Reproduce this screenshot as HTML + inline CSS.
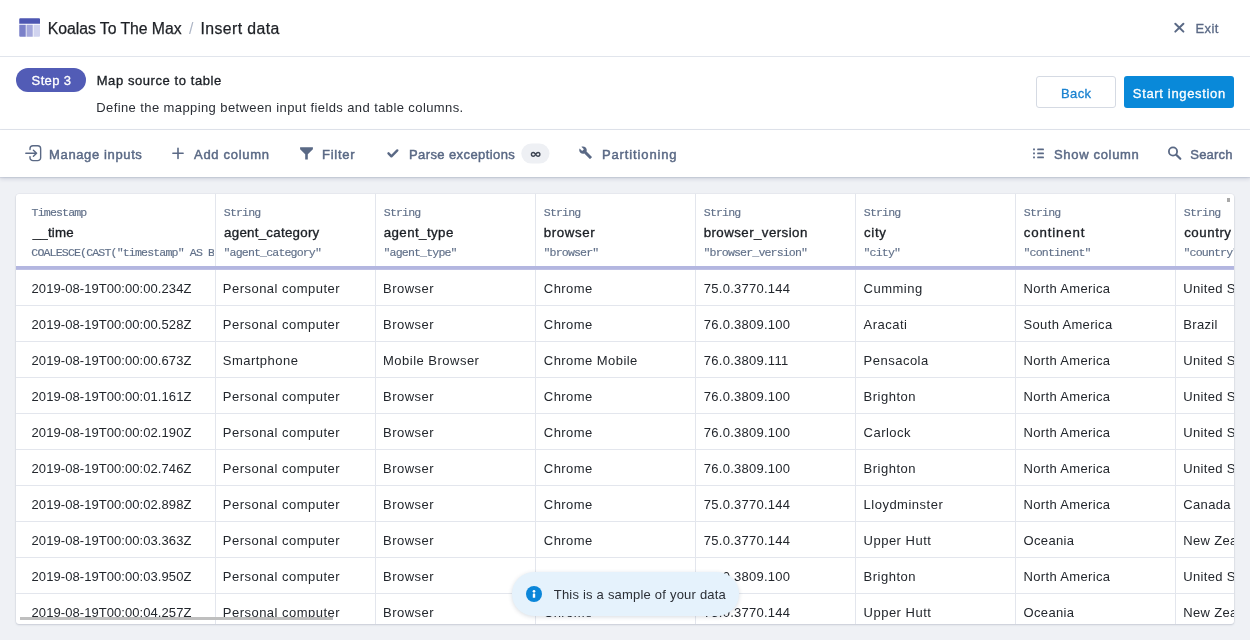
<!DOCTYPE html>
<html><head><meta charset="utf-8">
<style>
*{box-sizing:border-box;margin:0;padding:0}
html,body{width:1250px;height:640px;overflow:hidden;background:#eff1f5;font-family:"Liberation Sans",sans-serif;color:#1d2127}
#root{position:absolute;left:0;top:0;width:1250px;height:640px;will-change:transform}
.a{position:absolute;white-space:nowrap}
.t{position:absolute;white-space:nowrap;line-height:16px}
#hdr{position:absolute;left:0;top:0;width:1250px;height:57px;background:#fff;border-bottom:1px solid #e1e5ec}
#step{position:absolute;left:0;top:57px;width:1250px;height:73px;background:#fff;border-bottom:1px solid #e1e5ec}
#tb{position:absolute;left:0;top:130px;width:1250px;height:47px;background:#fff;box-shadow:0 2px 4px rgba(40,55,100,.15),0 1px 1px rgba(40,55,100,.1)}
.pill{position:absolute;left:16px;top:68px;width:70px;height:24px;border-radius:12px;background:#525cb6}
.btn{position:absolute;top:76.4px;height:32px;border-radius:3px}
#card{position:absolute;left:16px;top:194px;width:1218px;height:430px;background:#fff;border-radius:3px;box-shadow:0 0 0 0.5px rgba(60,70,100,.08),0 1px 2px rgba(60,70,100,.18);overflow:hidden}
.vd{position:absolute;top:0;width:1px;height:430px;background:#e3e6ed}
.hc{position:absolute;top:0;height:72px;overflow:hidden}
.ty,.ex{position:absolute;font-family:"Liberation Mono",monospace;font-size:11.6px;line-height:12px;letter-spacing:-0.86px;color:#617089;-webkit-text-stroke:0.15px #617089;white-space:nowrap}
.fn{position:absolute;font-size:13.3px;line-height:16px;letter-spacing:0.2px;-webkit-text-stroke:0.35px #1c2026;color:#1c2026;white-space:nowrap}
.bl{position:absolute;left:0;top:72px;width:1218px;height:4px;background:#b3b6e0;border-bottom:1px solid #bdbfe4}
.rd{position:absolute;left:0;width:1218px;height:1px;background:#e3e6ed}
.dc{position:absolute;height:16px;overflow:hidden;font-size:13px;line-height:16px;color:#23272d;white-space:nowrap}
#toast{position:absolute;left:511.5px;top:572px;width:227px;height:44px;border-radius:22px;background:#e5f2fc;box-shadow:0 1px 4px rgba(40,60,90,.18)}

</style></head><body>
<div id="root">
<div id="hdr">
  <svg class="a" style="left:19px;top:18px" width="22" height="20" viewBox="0 0 22 20">
    <path d="M1.25 0.25h18.75a1 1 0 0 1 1 1v4.5h-20.75v-4.5a1 1 0 0 1 1-1z" fill="#4e57b2"/>
    <path d="M0.25 6.75h6.5v12h-5.5a1 1 0 0 1-1-1z" fill="#7a80c9"/>
    <rect x="7.5" y="6.75" width="6.25" height="12" fill="#a4a8dc"/>
    <path d="M14.5 6.75h6.5v11a1 1 0 0 1-1 1h-5.5z" fill="#d0d3ef"/>
  </svg>
  <svg class="a" style="left:1172px;top:20px" width="14" height="14" viewBox="0 0 14 14"><path d="M3.3 3.7L11.4 11.6M11.4 3.7L3.3 11.6" stroke="#5a6985" stroke-width="2" stroke-linecap="round"/></svg>
</div>
<div id="step">
</div>
<div class="pill"></div>
<div class="btn" style="left:1036.4px;width:80px;border:1px solid #d5dae3;background:#fff"></div>
<div class="btn" style="left:1124.4px;width:110px;background:#0989d9"></div>
<div id="tb">
  <svg class="a" style="left:0;top:0" width="1250" height="47" viewBox="0 0 1250 47">
    <g fill="none" stroke="#5a6985" stroke-width="1.4" stroke-linecap="round" stroke-linejoin="round">
      <path d="M30 19.5V18.75A3 3 0 0 1 33 15.75H37.65A3 3 0 0 1 40.65 18.75V27.65A3 3 0 0 1 37.65 30.65H33A3 3 0 0 1 30 27.65V26.6"/>
      <path d="M25.8 23.2H36.6M33.4 20.2L36.6 23.2L33.4 26.2"/>
    </g>
    <path d="M172.9 23.3H183.1M178 18.3V28.5" stroke="#5a6985" stroke-width="1.6" stroke-linecap="round"/>
    <path d="M300.1 17.3H312.9V19.3L307.8 24.2V29.5H305.2V24.2L300.1 19.3Z" fill="#5a6985"/>
    <path d="M388.5 23.3L391.4 26.3L397.3 20.4" fill="none" stroke="#5a6985" stroke-width="2.4" stroke-linecap="round" stroke-linejoin="round"/>
    <rect x="521.3" y="13.5" width="28.2" height="20.1" rx="10" fill="#eef0f4"/>
    <path d="M535.65 24.35C534.8 23 534.1 22.45 533.3 22.45A1.9 1.9 0 0 0 533.3 26.25C534.1 26.25 534.8 25.7 535.65 24.35C536.5 23 537.2 22.45 538 22.45A1.9 1.9 0 0 1 538 26.25C537.2 26.25 536.5 25.7 535.65 24.35Z" fill="none" stroke="#3d4452" stroke-width="1.35"/>
    <g transform="translate(578.7 15.8) scale(0.575)"><path d="M22.7 19l-9.1-9.1c.9-2.3.4-5-1.5-6.9-2-2-5-2.4-7.4-1.3L9 6 6 9 1.6 4.7C.4 7.1.9 10.1 2.9 12.1c1.9 1.9 4.6 2.4 6.9 1.5l9.1 9.1c.4.4 1 .4 1.4 0l2.3-2.3c.5-.4.5-1.1.1-1.4z" fill="#5a6985"/></g>
    <g fill="#5a6985">
      <rect x="1033.1" y="18.5" width="1.8" height="1.8"/><rect x="1037.2" y="18.5" width="6.7" height="1.8" rx=".4"/>
      <rect x="1033.1" y="22.5" width="1.8" height="1.8"/><rect x="1037.2" y="22.5" width="6.7" height="1.8" rx=".4"/>
      <rect x="1033.1" y="26.5" width="1.8" height="1.8"/><rect x="1037.2" y="26.5" width="6.7" height="1.8" rx=".4"/>
    </g>
    <circle cx="1173" cy="21.5" r="4.1" fill="none" stroke="#5a6985" stroke-width="1.8"/>
    <path d="M1176.2 24.7L1180.3 28.8" stroke="#5a6985" stroke-width="2.2" stroke-linecap="round"/>
  </svg>
</div>
<div id="crumb1" class="t" style="left:47.85px;top:21.30px;font-size:15.8px;letter-spacing:-0.055px;-webkit-text-stroke:0.25px #1e2126;color:#1e2126">Koalas To The Max</div>
<div id="crumb2" class="t" style="left:189.01px;top:21.30px;font-size:15.8px;letter-spacing:0.000px;color:#aeb6c6">/</div>
<div id="crumb3" class="t" style="left:200.51px;top:21.30px;font-size:15.8px;letter-spacing:0.416px;-webkit-text-stroke:0.25px #1e2126;color:#1e2126">Insert data</div>
<div id="exit" class="t" style="left:1195.39px;top:21.30px;font-size:13px;letter-spacing:0.416px;-webkit-text-stroke:0.3px #5a6985;color:#5a6985">Exit</div>
<div id="steptxt" class="t" style="left:31.62px;top:73.30px;font-size:13px;letter-spacing:0.365px;-webkit-text-stroke:0.3px #ffffff;color:#ffffff">Step 3</div>
<div id="title" class="t" style="left:96.72px;top:73.30px;font-size:13px;letter-spacing:0.573px;-webkit-text-stroke:0.35px #1c2026;color:#1c2026">Map source to table</div>
<div id="desc" class="t" style="left:96.27px;top:100.30px;font-size:13px;letter-spacing:0.402px;color:#2a2e35">Define the mapping between input fields and table columns.</div>
<div id="back" class="t" style="left:1061.07px;top:86.30px;font-size:13px;letter-spacing:0.357px;-webkit-text-stroke:0.3px #1a82d0;color:#1a82d0">Back</div>
<div id="start" class="t" style="left:1132.83px;top:86.30px;font-size:13px;letter-spacing:0.661px;-webkit-text-stroke:0.3px #ffffff;color:#ffffff">Start ingestion</div>
<div id="tb1" class="t" style="left:49.09px;top:147.30px;font-size:13px;letter-spacing:0.626px;-webkit-text-stroke:0.45px #5a6985;color:#5a6985">Manage inputs</div>
<div id="tb2" class="t" style="left:194.09px;top:147.30px;font-size:13px;letter-spacing:0.691px;-webkit-text-stroke:0.45px #5a6985;color:#5a6985">Add column</div>
<div id="tb3" class="t" style="left:322.07px;top:147.30px;font-size:13px;letter-spacing:0.740px;-webkit-text-stroke:0.45px #5a6985;color:#5a6985">Filter</div>
<div id="tb4" class="t" style="left:408.98px;top:147.30px;font-size:13px;letter-spacing:0.406px;-webkit-text-stroke:0.45px #5a6985;color:#5a6985">Parse exceptions</div>
<div id="tb5" class="t" style="left:601.98px;top:147.30px;font-size:13px;letter-spacing:0.870px;-webkit-text-stroke:0.45px #5a6985;color:#5a6985">Partitioning</div>
<div id="tb6" class="t" style="left:1053.98px;top:147.30px;font-size:13px;letter-spacing:0.684px;-webkit-text-stroke:0.45px #5a6985;color:#5a6985">Show column</div>
<div id="tb7" class="t" style="left:1190.32px;top:147.30px;font-size:13px;letter-spacing:0.205px;-webkit-text-stroke:0.45px #5a6985;color:#5a6985">Search</div>
<div id="card">
<div class="vd" style="left:199px"></div>
<div class="vd" style="left:359px"></div>
<div class="vd" style="left:519px"></div>
<div class="vd" style="left:679px"></div>
<div class="vd" style="left:839px"></div>
<div class="vd" style="left:999px"></div>
<div class="vd" style="left:1159px"></div>
<div class="hc" style="left:0px;width:198px"><div class="ty" style="left:15.60px;top:13.30px">Timestamp</div><div class="fn" style="left:16.74px;top:31.30px;letter-spacing:0.200px">__time</div><div class="ex" style="left:15.30px;top:53.30px">COALESCE(CAST("timestamp" AS BIGINT),0)</div></div>
<div class="hc" style="left:199px;width:159px"><div class="ty" style="left:8.80px;top:13.30px">String</div><div class="fn" style="left:9.09px;top:31.30px;letter-spacing:0.270px">agent_category</div><div class="ex" style="left:8.50px;top:53.30px">"agent_category"</div></div>
<div class="hc" style="left:359px;width:159px"><div class="ty" style="left:8.80px;top:13.30px">String</div><div class="fn" style="left:8.68px;top:31.30px;letter-spacing:0.423px">agent_type</div><div class="ex" style="left:8.50px;top:53.30px">"agent_type"</div></div>
<div class="hc" style="left:519px;width:159px"><div class="ty" style="left:8.80px;top:13.30px">String</div><div class="fn" style="left:8.81px;top:31.30px;letter-spacing:0.595px">browser</div><div class="ex" style="left:8.50px;top:53.30px">"browser"</div></div>
<div class="hc" style="left:679px;width:159px"><div class="ty" style="left:8.80px;top:13.30px">String</div><div class="fn" style="left:8.67px;top:31.30px;letter-spacing:0.435px">browser_version</div><div class="ex" style="left:8.50px;top:53.30px">"browser_version"</div></div>
<div class="hc" style="left:839px;width:159px"><div class="ty" style="left:8.80px;top:13.30px">String</div><div class="fn" style="left:9.03px;top:31.30px;letter-spacing:0.656px">city</div><div class="ex" style="left:8.50px;top:53.30px">"city"</div></div>
<div class="hc" style="left:999px;width:159px"><div class="ty" style="left:8.80px;top:13.30px">String</div><div class="fn" style="left:8.75px;top:31.30px;letter-spacing:0.835px">continent</div><div class="ex" style="left:8.50px;top:53.30px">"continent"</div></div>
<div class="hc" style="left:1159px;width:159px"><div class="ty" style="left:8.80px;top:13.30px">String</div><div class="fn" style="left:9.20px;top:31.30px;letter-spacing:0.536px">country</div><div class="ex" style="left:8.50px;top:53.30px">"country"</div></div>
<div class="bl"></div>
<div class="rd" style="top:111px"></div>
<div class="dc" style="left:0px;width:198px;top:87.30px;padding-left:15.57px;letter-spacing:0.066px">2019-08-19T00:00:00.234Z</div>
<div class="dc" style="left:199px;width:159px;top:87.30px;padding-left:7.84px;letter-spacing:0.473px">Personal computer</div>
<div class="dc" style="left:359px;width:159px;top:87.30px;padding-left:8.01px;letter-spacing:0.488px">Browser</div>
<div class="dc" style="left:519px;width:159px;top:87.30px;padding-left:8.83px;letter-spacing:0.448px">Chrome</div>
<div class="dc" style="left:679px;width:159px;top:87.30px;padding-left:8.87px;letter-spacing:0.256px">75.0.3770.144</div>
<div class="dc" style="left:839px;width:159px;top:87.30px;padding-left:8.56px;letter-spacing:0.498px">Cumming</div>
<div class="dc" style="left:999px;width:159px;top:87.30px;padding-left:8.56px;letter-spacing:0.337px">North America</div>
<div class="dc" style="left:1159px;width:159px;top:87.30px;padding-left:8.24px;letter-spacing:0.349px">United States</div>
<div class="rd" style="top:147px"></div>
<div class="dc" style="left:0px;width:198px;top:123.30px;padding-left:15.57px;letter-spacing:0.066px">2019-08-19T00:00:00.528Z</div>
<div class="dc" style="left:199px;width:159px;top:123.30px;padding-left:7.84px;letter-spacing:0.473px">Personal computer</div>
<div class="dc" style="left:359px;width:159px;top:123.30px;padding-left:8.01px;letter-spacing:0.488px">Browser</div>
<div class="dc" style="left:519px;width:159px;top:123.30px;padding-left:8.83px;letter-spacing:0.448px">Chrome</div>
<div class="dc" style="left:679px;width:159px;top:123.30px;padding-left:8.87px;letter-spacing:0.256px">76.0.3809.100</div>
<div class="dc" style="left:839px;width:159px;top:123.30px;padding-left:8.56px;letter-spacing:0.498px">Aracati</div>
<div class="dc" style="left:999px;width:159px;top:123.30px;padding-left:8.56px;letter-spacing:0.337px">South America</div>
<div class="dc" style="left:1159px;width:159px;top:123.30px;padding-left:8.24px;letter-spacing:0.349px">Brazil</div>
<div class="rd" style="top:183px"></div>
<div class="dc" style="left:0px;width:198px;top:159.30px;padding-left:15.57px;letter-spacing:0.066px">2019-08-19T00:00:00.673Z</div>
<div class="dc" style="left:199px;width:159px;top:159.30px;padding-left:7.84px;letter-spacing:0.473px">Smartphone</div>
<div class="dc" style="left:359px;width:159px;top:159.30px;padding-left:8.01px;letter-spacing:0.488px">Mobile Browser</div>
<div class="dc" style="left:519px;width:159px;top:159.30px;padding-left:8.83px;letter-spacing:0.448px">Chrome Mobile</div>
<div class="dc" style="left:679px;width:159px;top:159.30px;padding-left:8.87px;letter-spacing:0.256px">76.0.3809.111</div>
<div class="dc" style="left:839px;width:159px;top:159.30px;padding-left:8.56px;letter-spacing:0.498px">Pensacola</div>
<div class="dc" style="left:999px;width:159px;top:159.30px;padding-left:8.56px;letter-spacing:0.337px">North America</div>
<div class="dc" style="left:1159px;width:159px;top:159.30px;padding-left:8.24px;letter-spacing:0.349px">United States</div>
<div class="rd" style="top:219px"></div>
<div class="dc" style="left:0px;width:198px;top:195.30px;padding-left:15.57px;letter-spacing:0.066px">2019-08-19T00:00:01.161Z</div>
<div class="dc" style="left:199px;width:159px;top:195.30px;padding-left:7.84px;letter-spacing:0.473px">Personal computer</div>
<div class="dc" style="left:359px;width:159px;top:195.30px;padding-left:8.01px;letter-spacing:0.488px">Browser</div>
<div class="dc" style="left:519px;width:159px;top:195.30px;padding-left:8.83px;letter-spacing:0.448px">Chrome</div>
<div class="dc" style="left:679px;width:159px;top:195.30px;padding-left:8.87px;letter-spacing:0.256px">76.0.3809.100</div>
<div class="dc" style="left:839px;width:159px;top:195.30px;padding-left:8.56px;letter-spacing:0.498px">Brighton</div>
<div class="dc" style="left:999px;width:159px;top:195.30px;padding-left:8.56px;letter-spacing:0.337px">North America</div>
<div class="dc" style="left:1159px;width:159px;top:195.30px;padding-left:8.24px;letter-spacing:0.349px">United States</div>
<div class="rd" style="top:255px"></div>
<div class="dc" style="left:0px;width:198px;top:231.30px;padding-left:15.57px;letter-spacing:0.066px">2019-08-19T00:00:02.190Z</div>
<div class="dc" style="left:199px;width:159px;top:231.30px;padding-left:7.84px;letter-spacing:0.473px">Personal computer</div>
<div class="dc" style="left:359px;width:159px;top:231.30px;padding-left:8.01px;letter-spacing:0.488px">Browser</div>
<div class="dc" style="left:519px;width:159px;top:231.30px;padding-left:8.83px;letter-spacing:0.448px">Chrome</div>
<div class="dc" style="left:679px;width:159px;top:231.30px;padding-left:8.87px;letter-spacing:0.256px">76.0.3809.100</div>
<div class="dc" style="left:839px;width:159px;top:231.30px;padding-left:8.56px;letter-spacing:0.498px">Carlock</div>
<div class="dc" style="left:999px;width:159px;top:231.30px;padding-left:8.56px;letter-spacing:0.337px">North America</div>
<div class="dc" style="left:1159px;width:159px;top:231.30px;padding-left:8.24px;letter-spacing:0.349px">United States</div>
<div class="rd" style="top:291px"></div>
<div class="dc" style="left:0px;width:198px;top:267.30px;padding-left:15.57px;letter-spacing:0.066px">2019-08-19T00:00:02.746Z</div>
<div class="dc" style="left:199px;width:159px;top:267.30px;padding-left:7.84px;letter-spacing:0.473px">Personal computer</div>
<div class="dc" style="left:359px;width:159px;top:267.30px;padding-left:8.01px;letter-spacing:0.488px">Browser</div>
<div class="dc" style="left:519px;width:159px;top:267.30px;padding-left:8.83px;letter-spacing:0.448px">Chrome</div>
<div class="dc" style="left:679px;width:159px;top:267.30px;padding-left:8.87px;letter-spacing:0.256px">76.0.3809.100</div>
<div class="dc" style="left:839px;width:159px;top:267.30px;padding-left:8.56px;letter-spacing:0.498px">Brighton</div>
<div class="dc" style="left:999px;width:159px;top:267.30px;padding-left:8.56px;letter-spacing:0.337px">North America</div>
<div class="dc" style="left:1159px;width:159px;top:267.30px;padding-left:8.24px;letter-spacing:0.349px">United States</div>
<div class="rd" style="top:327px"></div>
<div class="dc" style="left:0px;width:198px;top:303.30px;padding-left:15.57px;letter-spacing:0.066px">2019-08-19T00:00:02.898Z</div>
<div class="dc" style="left:199px;width:159px;top:303.30px;padding-left:7.84px;letter-spacing:0.473px">Personal computer</div>
<div class="dc" style="left:359px;width:159px;top:303.30px;padding-left:8.01px;letter-spacing:0.488px">Browser</div>
<div class="dc" style="left:519px;width:159px;top:303.30px;padding-left:8.83px;letter-spacing:0.448px">Chrome</div>
<div class="dc" style="left:679px;width:159px;top:303.30px;padding-left:8.87px;letter-spacing:0.256px">75.0.3770.144</div>
<div class="dc" style="left:839px;width:159px;top:303.30px;padding-left:8.56px;letter-spacing:0.498px">Lloydminster</div>
<div class="dc" style="left:999px;width:159px;top:303.30px;padding-left:8.56px;letter-spacing:0.337px">North America</div>
<div class="dc" style="left:1159px;width:159px;top:303.30px;padding-left:8.24px;letter-spacing:0.349px">Canada</div>
<div class="rd" style="top:363px"></div>
<div class="dc" style="left:0px;width:198px;top:339.30px;padding-left:15.57px;letter-spacing:0.066px">2019-08-19T00:00:03.363Z</div>
<div class="dc" style="left:199px;width:159px;top:339.30px;padding-left:7.84px;letter-spacing:0.473px">Personal computer</div>
<div class="dc" style="left:359px;width:159px;top:339.30px;padding-left:8.01px;letter-spacing:0.488px">Browser</div>
<div class="dc" style="left:519px;width:159px;top:339.30px;padding-left:8.83px;letter-spacing:0.448px">Chrome</div>
<div class="dc" style="left:679px;width:159px;top:339.30px;padding-left:8.87px;letter-spacing:0.256px">75.0.3770.144</div>
<div class="dc" style="left:839px;width:159px;top:339.30px;padding-left:8.56px;letter-spacing:0.498px">Upper Hutt</div>
<div class="dc" style="left:999px;width:159px;top:339.30px;padding-left:8.56px;letter-spacing:0.337px">Oceania</div>
<div class="dc" style="left:1159px;width:159px;top:339.30px;padding-left:8.24px;letter-spacing:0.349px">New Zealand</div>
<div class="rd" style="top:399px"></div>
<div class="dc" style="left:0px;width:198px;top:375.30px;padding-left:15.57px;letter-spacing:0.066px">2019-08-19T00:00:03.950Z</div>
<div class="dc" style="left:199px;width:159px;top:375.30px;padding-left:7.84px;letter-spacing:0.473px">Personal computer</div>
<div class="dc" style="left:359px;width:159px;top:375.30px;padding-left:8.01px;letter-spacing:0.488px">Browser</div>
<div class="dc" style="left:519px;width:159px;top:375.30px;padding-left:8.83px;letter-spacing:0.448px">Chrome</div>
<div class="dc" style="left:679px;width:159px;top:375.30px;padding-left:8.87px;letter-spacing:0.256px">76.0.3809.100</div>
<div class="dc" style="left:839px;width:159px;top:375.30px;padding-left:8.56px;letter-spacing:0.498px">Brighton</div>
<div class="dc" style="left:999px;width:159px;top:375.30px;padding-left:8.56px;letter-spacing:0.337px">North America</div>
<div class="dc" style="left:1159px;width:159px;top:375.30px;padding-left:8.24px;letter-spacing:0.349px">United States</div>
<div class="rd" style="top:435px"></div>
<div class="dc" style="left:0px;width:198px;top:411.30px;padding-left:15.57px;letter-spacing:0.066px">2019-08-19T00:00:04.257Z</div>
<div class="dc" style="left:199px;width:159px;top:411.30px;padding-left:7.84px;letter-spacing:0.473px">Personal computer</div>
<div class="dc" style="left:359px;width:159px;top:411.30px;padding-left:8.01px;letter-spacing:0.488px">Browser</div>
<div class="dc" style="left:519px;width:159px;top:411.30px;padding-left:8.83px;letter-spacing:0.448px">Chrome</div>
<div class="dc" style="left:679px;width:159px;top:411.30px;padding-left:8.87px;letter-spacing:0.256px">75.0.3770.144</div>
<div class="dc" style="left:839px;width:159px;top:411.30px;padding-left:8.56px;letter-spacing:0.498px">Upper Hutt</div>
<div class="dc" style="left:999px;width:159px;top:411.30px;padding-left:8.56px;letter-spacing:0.337px">Oceania</div>
<div class="dc" style="left:1159px;width:159px;top:411.30px;padding-left:8.24px;letter-spacing:0.349px">New Zealand</div>
  <div class="a sb" style="left:4px;top:423px;width:313px;height:3px;background:#bfbfbf"></div>
  <div class="a sb" style="left:1211px;top:4px;width:3px;height:4px;background:#a9a9a9"></div>
</div>
<div id="toast">
  <svg class="a" style="left:14px;top:14px" width="16" height="16" viewBox="0 0 16 16"><circle cx="8" cy="8" r="8" fill="#0b86d9"/><circle cx="8" cy="5.3" r="1.35" fill="#fff"/><rect x="6.8" y="7.6" width="2.4" height="4.2" rx=".4" fill="#fff"/></svg>
  <div id="toasttxt" class="t" style="left:42.29px;top:15.30px;font-size:13px;letter-spacing:0.209px;color:#2b2f36">This is a sample of your data</div>
</div>
</div>
</body></html>
